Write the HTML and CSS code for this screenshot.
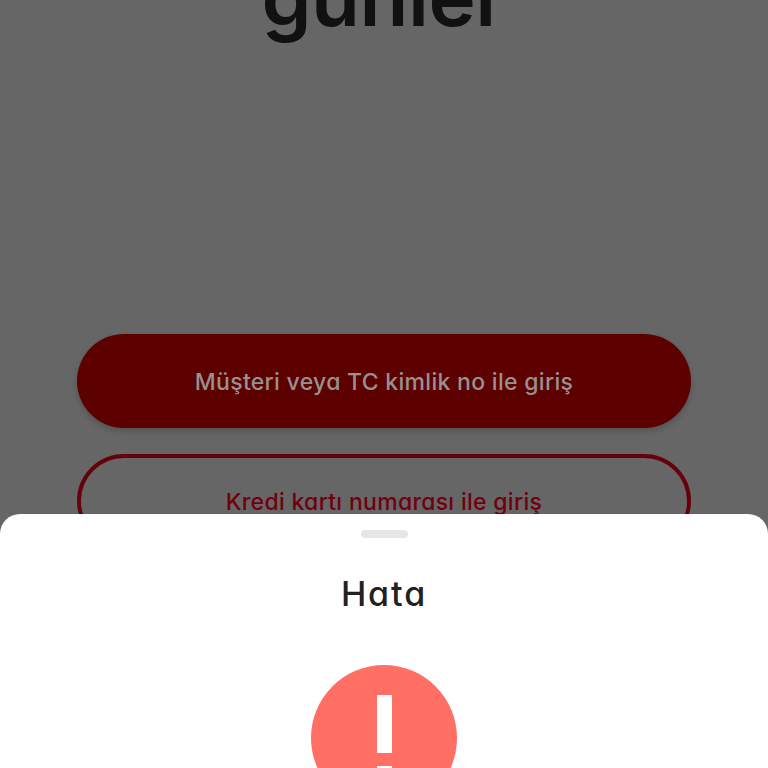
FILE: index.html
```html
<!DOCTYPE html>
<html lang="tr">
<head>
<meta charset="utf-8">
<title>Giriş</title>
<link rel="stylesheet" href="styles.css">
</head>
<body>
<main class="screen">
  <h1 class="headline">günler</h1>
  <div class="actions">
    <button class="btn btn-primary">Müşteri veya TC kimlik no ile giriş</button>
    <button class="btn btn-outline">Kredi kartı numarası ile giriş</button>
  </div>
</main>
<section class="sheet">
  <div class="handle"></div>
  <h2 class="sheet-title">Hata</h2>
  <div class="alert-icon">
    <span class="bar"></span>
    <span class="dot"></span>
  </div>
</section>
</body>
</html>
```
FILE: styles.css
```css
* { box-sizing: border-box; }
html, body { margin: 0; height: 768px; overflow: hidden; }
body { position: relative; background: #666666; font-family: "Inter", "Lato", sans-serif; font-feature-settings: "cv11" 1; }
.screen { display: flex; flex-direction: column; align-items: center; height: 768px; }
.headline {
  flex: none;
  margin: -58px 0 0;
  height: 392px;
  font-size: 80px;
  line-height: 110px;
  font-weight: 600;
  color: #111111;
  letter-spacing: -0.5px;
}
.actions { display: flex; flex-direction: column; gap: 26px; width: 614px; flex: none; }
.btn {
  flex: none;
  height: 94px;
  padding: 2px 0 0;
  border-radius: 47px;
  font-family: "Inter", "Lato", sans-serif;
  font-feature-settings: "cv11" 1;
  font-size: 23px;
  font-weight: 500;
  letter-spacing: 0.3px;
}
.btn-primary { background: #5c0000; border: 0; color: #979191; box-shadow: 0 3px 6px rgba(0,0,0,0.2); }
.btn-outline { background: transparent; border: 4px solid #65000c; color: #72000c; }
.sheet {
  position: absolute;
  left: 0; right: 0; bottom: 0;
  height: 254px;
  background: #ffffff;
  border-radius: 20px 20px 0 0;
  display: flex;
  flex-direction: column;
  align-items: center;
  overflow: hidden;
}
.handle { flex: none; width: 47px; height: 8px; margin-top: 16px; border-radius: 4px; background: #e6e6e8; }
.sheet-title {
  flex: none;
  margin: 35px 0 0;
  font-size: 34px;
  line-height: 42px;
  font-weight: 500;
  color: #222222;
  letter-spacing: 1.9px;
}
.alert-icon {
  position: relative;
  flex: none;
  width: 146px; height: 146px;
  margin-top: 50px;
  border-radius: 50%;
  background: #ff6f64;
}
.bar { position: absolute; left: 66px; top: 30px; width: 15px; height: 58px; background: #fff; }
.dot { position: absolute; left: 66px; top: 101px; width: 15px; height: 15px; background: #fff; }
```
